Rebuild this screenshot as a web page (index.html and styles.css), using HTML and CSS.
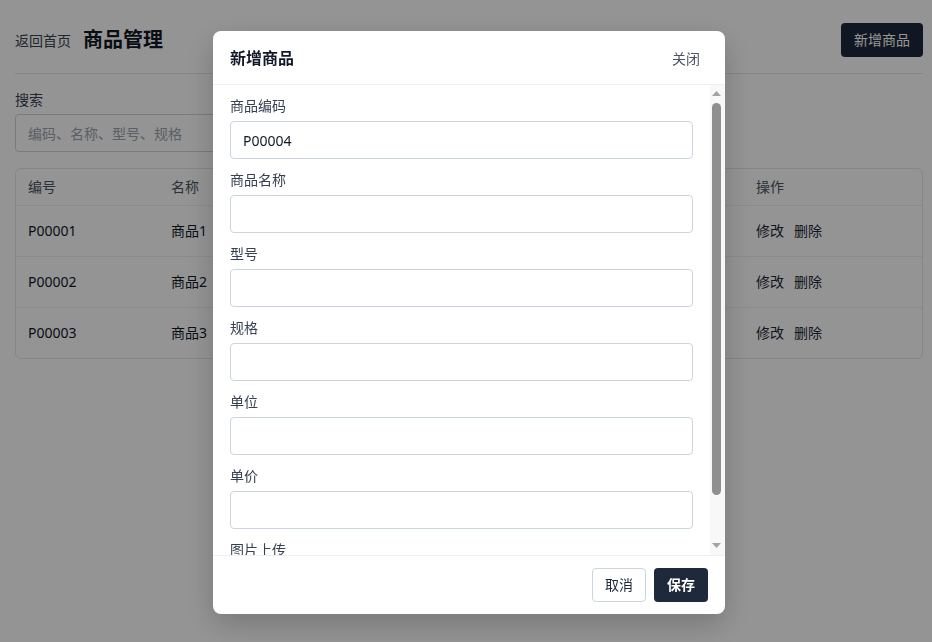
FILE: index.html
```html
<!DOCTYPE html>
<html lang="zh-CN">
<head>
  <meta charset="UTF-8" />
  <meta name="viewport" content="width=device-width, initial-scale=1.0" />
  <title>商品管理</title>
  <link rel="stylesheet" href="styles.css">
</head>
<body>
  <div class="page">
    <header class="top-bar">
      <div class="top-left">
        <a href="#" class="back-link">返回首页</a>
        <h1>商品管理</h1>
      </div>
      <button class="btn btn-dark">新增商品</button>
    </header>

    <div class="search-box">
      <label class="field-label">搜索</label>
      <input type="text" class="text-input search-input" placeholder="编码、名称、型号、规格">
    </div>

    <div class="table-wrap">
      <table class="product-table">
        <colgroup>
          <col style="width: 143px">
          <col style="width: 150px">
          <col style="width: 110px">
          <col style="width: 110px">
          <col style="width: 90px">
          <col>
          <col style="width: 178px">
        </colgroup>
        <thead>
          <tr>
            <th>编号</th>
            <th>名称</th>
            <th>型号</th>
            <th>规格</th>
            <th>单位</th>
            <th>单价</th>
            <th>操作</th>
          </tr>
        </thead>
        <tbody>
          <tr>
            <td>P00001</td>
            <td>商品1</td>
            <td>X-1</td>
            <td>标准</td>
            <td>个</td>
            <td>10.00</td>
            <td><a href="#" class="op">修改</a><a href="#" class="op">删除</a></td>
          </tr>
          <tr>
            <td>P00002</td>
            <td>商品2</td>
            <td>X-2</td>
            <td>标准</td>
            <td>个</td>
            <td>20.00</td>
            <td><a href="#" class="op">修改</a><a href="#" class="op">删除</a></td>
          </tr>
          <tr>
            <td>P00003</td>
            <td>商品3</td>
            <td>X-3</td>
            <td>标准</td>
            <td>个</td>
            <td>30.00</td>
            <td><a href="#" class="op">修改</a><a href="#" class="op">删除</a></td>
          </tr>
        </tbody>
      </table>
    </div>
  </div>

  <div class="overlay">
    <div class="modal">
      <div class="modal-header">
        <h2>新增商品</h2>
        <button class="close-btn">关闭</button>
      </div>
      <div class="modal-main">
        <div class="modal-body">
          <div class="field">
            <label class="field-label">商品编码</label>
            <input type="text" class="text-input" value="P00004">
          </div>
          <div class="field">
            <label class="field-label">商品名称</label>
            <input type="text" class="text-input">
          </div>
          <div class="field">
            <label class="field-label">型号</label>
            <input type="text" class="text-input">
          </div>
          <div class="field">
            <label class="field-label">规格</label>
            <input type="text" class="text-input">
          </div>
          <div class="field">
            <label class="field-label">单位</label>
            <input type="text" class="text-input">
          </div>
          <div class="field">
            <label class="field-label">单价</label>
            <input type="text" class="text-input">
          </div>
          <div class="field field-last">
            <label class="field-label">图片上传</label>
            <input type="file" class="file-input">
          </div>
        </div>
        <!-- drawn scrollbar: the browser here hides native ones -->
        <div class="scrollbar">
          <svg class="scroll-arrow" width="15" height="15" viewBox="0 0 15 15"><polygon points="2,11 11,11 6.5,6" fill="#a3a3a3"/></svg>
          <div class="scroll-track"><div class="scroll-thumb"></div></div>
          <svg class="scroll-arrow" width="15" height="15" viewBox="0 0 15 15"><polygon points="2,3 11,3 6.5,8" fill="#a3a3a3"/></svg>
        </div>
      </div>
      <div class="modal-footer">
        <button class="btn btn-light">取消</button>
        <button class="btn btn-dark btn-save">保存</button>
      </div>
    </div>
  </div>
</body>
</html>
```

FILE: styles.css
```css
body {
  font-family: "Noto Sans", "Noto Sans CJK SC", sans-serif;
  margin: 0;
  padding: 0;
  background-color: #fff;
  color: #111827;
  font-size: 14px;
}
.page {
  padding: 23px 9px 0 15px;
}
.top-bar {
  display: flex;
  align-items: center;
  justify-content: space-between;
  padding-bottom: 16px;
  border-bottom: 1px solid #e5e7eb;
}
.top-left {
  display: flex;
  align-items: center;
  gap: 12px;
}
.back-link {
  color: #374151;
  text-decoration: none;
  font-size: 14px;
}
h1 {
  margin: 0;
  font-size: 20px;
  font-weight: 700;
  line-height: 28px;
  color: #111827;
}
.btn {
  height: 34px;
  padding: 0 13px;
  border-radius: 4px;
  font-family: inherit;
  font-size: 14px;
  cursor: pointer;
  line-height: 20px;
}
.btn-dark {
  background-color: #1e293b;
  color: #fff;
  border: none;
}
.btn-light {
  background-color: #fff;
  color: #1f2937;
  border: 1px solid #cbd5e1;
  padding: 0 12px;
}
.search-box {
  margin-top: 16px;
}
.field-label {
  display: block;
  line-height: 20px;
  margin-bottom: 5px;
  color: #374151;
  font-size: 14px;
}
.text-input {
  display: block;
  width: 100%;
  height: 38px;
  padding: 0 12px;
  border: 1px solid #cbd5e1;
  border-radius: 4px;
  box-sizing: border-box;
  font-family: inherit;
  font-size: 14px;
  color: #111827;
}
.text-input::placeholder {
  color: #9ca3af;
}
.search-input {
  width: 360px;
  margin-top: -1px;
}
.table-wrap {
  margin-top: 16px;
  border: 1px solid #e5e7eb;
  border-radius: 6px;
  overflow: hidden;
}
.product-table {
  width: 100%;
  border-collapse: collapse;
  table-layout: fixed;
}
.product-table th {
  text-align: left;
  font-weight: 400;
  color: #4b5563;
  padding: 8px 12px;
  line-height: 20px;
  border-bottom: 1px solid #eef0f3;
}
.product-table td {
  padding: 15px 12px;
  line-height: 20px;
  color: #111827;
  border-bottom: 1px solid #eef0f3;
}
.product-table tbody tr:last-child td {
  border-bottom: none;
}
.op {
  color: #1f2937;
  text-decoration: none;
  margin-right: 10px;
}
.overlay {
  position: fixed;
  inset: 0;
  background-color: rgba(0, 0, 0, 0.42);
  display: flex;
  align-items: flex-start;
  justify-content: center;
  padding: 31px 0 0 6px;
}
.modal {
  width: 512px;
  height: 583px;
  background-color: #fff;
  border-radius: 8px;
  box-shadow: 0 10px 30px rgba(0, 0, 0, 0.2);
  display: flex;
  flex-direction: column;
  overflow: hidden;
}
.modal-header {
  display: flex;
  align-items: center;
  justify-content: space-between;
  padding: 16px 17px 15px 17px;
  border-bottom: 1px solid #eef0f3;
}
.modal-header h2 {
  margin: 0;
  font-size: 16px;
  font-weight: 700;
  line-height: 22px;
  color: #111827;
}
.close-btn {
  background: none;
  border: none;
  padding: 1px 8px;
  font-family: inherit;
  font-size: 14px;
  color: #4b5563;
  cursor: pointer;
}
.modal-main {
  flex: 1;
  display: flex;
  min-height: 0;
}
.modal-body {
  flex: 1;
  overflow: hidden;
  padding: 11px 17px 12px 17px;
}
.scrollbar {
  width: 15px;
  flex-shrink: 0;
  display: flex;
  flex-direction: column;
  background-color: #f8f8f8;
}
.scroll-arrow {
  display: block;
  flex-shrink: 0;
}
.scroll-track {
  flex: 1;
  padding: 3px 4px 0 2px;
}
.scroll-thumb {
  height: 392px;
  background-color: #8f8f8f;
  border-radius: 5px;
}
.field {
  margin-bottom: 11px;
}
.field-last .field-label {
  margin-top: 1px;
}
.file-input {
  font-family: inherit;
  font-size: 13px;
}
.modal-footer {
  display: flex;
  justify-content: flex-end;
  gap: 8px;
  padding: 12px 17px 12px 16px;
  border-top: 1px solid #eef0f3;
}
.btn-save {
  font-weight: 600;
}
```
